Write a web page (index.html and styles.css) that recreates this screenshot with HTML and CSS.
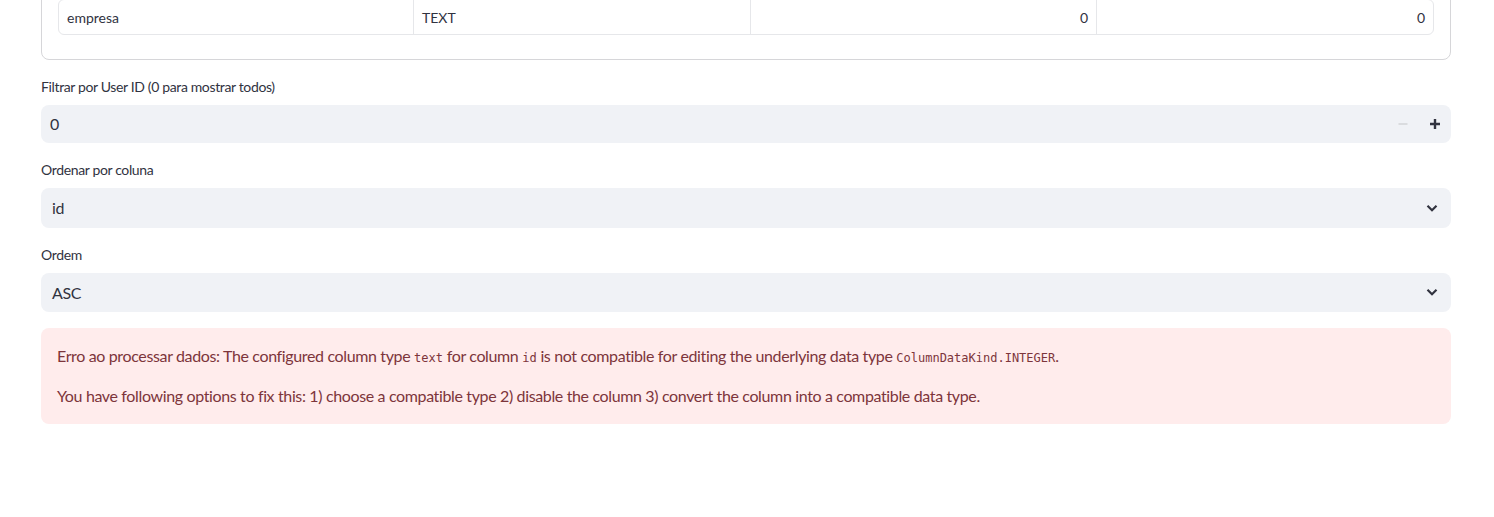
FILE: index.html
```html
<!DOCTYPE html>
<html lang="pt">
<head>
<meta charset="utf-8">
<title>Dados</title>
<link rel="stylesheet" href="styles.css">
</head>
<body>
<main class="page">
  <section class="panel">
    <div class="grid">
      <div class="cell">empresa</div>
      <div class="cell">TEXT</div>
      <div class="cell num">0</div>
      <div class="cell num">0</div>
    </div>
  </section>

  <div class="field">
    <label class="label">Filtrar por User ID (0 para mostrar todos)</label>
    <div class="input number">
      <span class="value">0</span>
      <div class="steppers">
        <button class="step disabled" aria-label="diminuir">
          <svg width="12" height="12" viewBox="0 0 12 12"><path d="M1.5 6h9" stroke="currentColor" stroke-width="1.6"/></svg>
        </button>
        <button class="step" aria-label="aumentar">
          <svg width="12" height="12" viewBox="0 0 12 12"><path d="M1 6h10M6 1v10" stroke="currentColor" stroke-width="2.4"/></svg>
        </button>
      </div>
    </div>
  </div>

  <div class="field">
    <label class="label">Ordenar por coluna</label>
    <div class="input select">
      <span class="value sel">id</span>
      <svg class="chev" width="14" height="14" viewBox="0 0 14 14"><path d="M2.5 4.8l4.5 4.4 4.5-4.4" fill="none" stroke="currentColor" stroke-width="2.2"/></svg>
    </div>
  </div>

  <div class="field">
    <label class="label">Ordem</label>
    <div class="input select">
      <span class="value sel">ASC</span>
      <svg class="chev" width="14" height="14" viewBox="0 0 14 14"><path d="M2.5 4.8l4.5 4.4 4.5-4.4" fill="none" stroke="currentColor" stroke-width="2.2"/></svg>
    </div>
  </div>

  <div class="alert">
    <p>Erro ao processar dados: The configured column type <code>text</code> for column <code>id</code> is not compatible for editing the underlying data type <code>ColumnDataKind.INTEGER</code>.</p>
    <p>You have following options to fix this: 1) choose a compatible type 2) disable the column 3) convert the column into a compatible data type.</p>
  </div>
</main>
</body>
</html>
```

FILE: styles.css
```css
* { box-sizing: border-box; }

html, body {
  margin: 0;
  padding: 0;
  background: #ffffff;
  overflow: hidden;
}

body {
  font-family: "Lato", "Noto Sans", sans-serif;
  color: #31333f;
  letter-spacing: -0.36px;
}

.page {
  padding: 0 43px 0 41px;
  display: flex;
  flex-direction: column;
  gap: 16px;
}

.panel {
  margin-top: -18px;
  border: 1px solid #d6d6d9;
  border-radius: 8px;
  padding: 16px 16px 24px 16px;
}

.grid {
  display: grid;
  grid-template-columns: 354px 337px 346px 1fr;
  border: 1px solid #e6e7ea;
  border-radius: 6px;
  overflow: hidden;
  font-size: 14px;
  letter-spacing: 0;
  color: #31333f;
}

.cell {
  height: 34px;
  display: flex;
  align-items: center;
  padding: 0 8px;
  border-left: 1px solid #e6e7ea;
}

.cell:first-child { border-left: none; }

.cell.num { justify-content: flex-end; }

.field {
  display: flex;
  flex-direction: column;
  gap: 8px;
}

.label {
  font-size: 14px;
  line-height: 21px;
  color: #31333f;
}

.input {
  background: #f0f2f6;
  border-radius: 8px;
  display: flex;
  align-items: center;
  font-size: 16px;
}

.input.number { height: 38px; padding-left: 9px; padding-bottom: 1px; }
.input.select { height: 39.5px; padding: 0 12px 0 11px; }

.value { flex: 1; }

.steppers { display: flex; height: 100%; }

.step {
  width: 32px;
  height: 100%;
  border: none;
  background: transparent;
  padding: 0;
  display: flex;
  align-items: center;
  justify-content: center;
  color: #31333f;
}

.step.disabled { color: #d5d6da; }

.chev { color: #31333f; }

.alert {
  background: #ffecec;
  color: #7d353b;
  border-radius: 8px;
  padding: 16px;
  font-size: 16px;
  line-height: 24px;
}

.alert p { margin: 0 0 16px 0; }
.alert p:last-child { margin-bottom: 0; }

code {
  font-family: "DejaVu Sans Mono", monospace;
  font-size: 12px;
  line-height: 1;
  letter-spacing: 0;
  color: #7d353b;
}
```
